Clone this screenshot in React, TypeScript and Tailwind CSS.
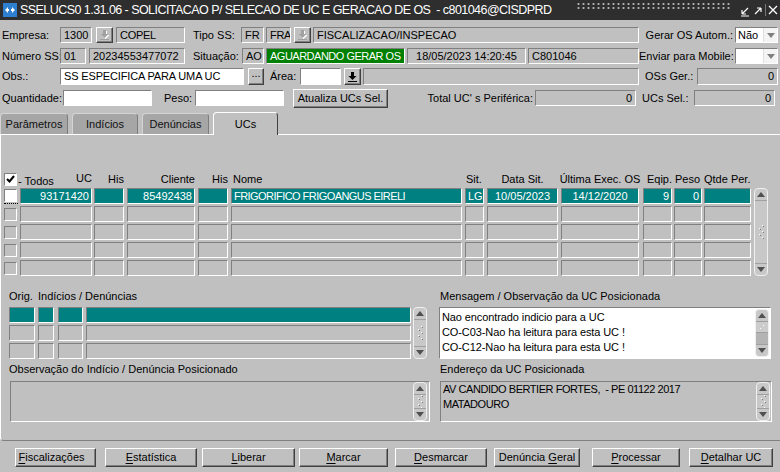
import React from "react";

const inset = "border border-t-[#808080] border-l-[#808080] border-r-white border-b-white";
const raised =
  "border border-t-white border-l-white border-r-[#404040] border-b-[#404040] shadow-[inset_-1px_-1px_0_#808080]";

type P = { className?: string; children?: React.ReactNode };

function Box({ className = "", children }: P) {
  return (
    <div className={`h-full shrink-0 flex items-center px-[3px] whitespace-nowrap overflow-hidden ${inset} ${className}`}>
      {children}
    </div>
  );
}

function Lbl({ className = "", children }: P) {
  return <span className={`shrink-0 whitespace-nowrap leading-[16px] ${className}`}>{children}</span>;
}

function LovBtn({ className = "", active = false }: { className?: string; active?: boolean }) {
  const c = active ? "#000" : "#a0a0a0";
  return (
    <div className={`h-full w-[17px] shrink-0 flex items-center justify-center ${raised} ${className}`}>
      <svg width="9" height="10" viewBox="0 0 9 10">
        {!active && <path d="M4 1h3v4h2.5L5.5 9 1.5 5H4z" fill="#fff" />}
        <path d="M3 0h3v4h2.5L4.5 8 .5 4H3z" fill={c} />
        <rect y="9" width="9" height="1" fill={c} />
      </svg>
    </div>
  );
}

function Select({ value }: { value?: string }) {
  return (
    <div className={`ml-[1px] h-full w-[43px] shrink-0 flex bg-white ${inset}`}>
      <span className="flex-1 pl-[2px] leading-[15px] overflow-hidden">{value}</span>
      <div className="w-[14px] flex items-center justify-center border-l border-[#e0e0e0] bg-[#f4f4f4]">
        <svg width="8" height="5" viewBox="0 0 8 5">
          <path d="M0 0h8L4 5z" fill="#808080" />
        </svg>
      </div>
    </div>
  );
}

function Grip() {
  return (
    <svg width="6" height="16" viewBox="0 0 6 16">
      {[
        [4, 1],
        [1, 4],
        [4, 7],
        [1, 10],
        [4, 13],
      ].map(([x, y], i) => (
        <g key={i}>
          <rect x={x} y={y} width="1" height="1" fill="#fff" />
          <rect x={x + 1} y={y + 1} width="1" height="1" fill="#808080" />
        </g>
      ))}
    </svg>
  );
}

function VScroll({ className = "", thumb = false }: { className?: string; thumb?: boolean }) {
  return (
    <div className={`w-[14px] shrink-0 flex flex-col rounded-[4px] border border-[#f0f0f0] bg-[#c8c8c8] ${className}`}>
      <div className="h-[12px] flex items-center justify-center rounded-t-[4px] border-b border-[#a0a0a0]">
        <svg width="8" height="5" viewBox="0 0 8 5">
          <path d="M0 5L4 0l4 5z" fill="#505050" />
        </svg>
      </div>
      {thumb ? (
        <div className="flex-1 flex flex-col">
          <div className="h-[11px] flex items-center justify-center border-b border-[#a0a0a0] bg-[#cccccc]">
            <svg width="6" height="6" viewBox="0 0 6 6">
              <rect x="4" y="1" width="1" height="1" fill="#fff" />
              <rect x="1" y="4" width="1" height="1" fill="#fff" />
            </svg>
          </div>
          <div className="flex-1 bg-[#b4b4b4]" />
        </div>
      ) : (
        <div className="flex-1 flex items-center justify-center overflow-hidden">
          <Grip />
        </div>
      )}
      <div className="h-[12px] flex items-center justify-center rounded-b-[4px] border-t border-[#a0a0a0]">
        <svg width="8" height="5" viewBox="0 0 8 5">
          <path d="M0 0h8L4 5z" fill="#505050" />
        </svg>
      </div>
    </div>
  );
}

function Btn({ className = "", children }: P) {
  return (
    <div className={`shrink-0 flex items-center justify-center whitespace-nowrap bg-[#c0c0c0] ${raised} ${className}`}>
      <span className="whitespace-pre">{children}</span>
    </div>
  );
}

function Tab({ className = "", children }: P) {
  return (
    <div
      className={`h-[21px] shrink-0 flex items-center justify-center rounded-t-[4px] border-t border-l border-r border-t-[#d4d4d4] border-l-[#d4d4d4] border-r-[#7c7c7c] bg-[#a6a6a6] text-[#111] ${className}`}
    >
      {children}
    </div>
  );
}

const cols = [
  { c: "ml-[2px] w-[72px] justify-end", v: "93171420" },
  { c: "ml-[2px] w-[30px] justify-end", v: "" },
  { c: "ml-[3px] w-[68px] justify-end", v: "85492438" },
  { c: "ml-[3px] w-[30px] justify-end", v: "" },
  { c: "ml-[3px] w-[231px] justify-start tracking-[-0.55px]", v: "FRIGORIFICO FRIGOANGUS EIRELI" },
  { c: "ml-[3px] w-[19px] justify-start", v: "LG" },
  { c: "ml-[3px] w-[71px] justify-center", v: "10/05/2023" },
  { c: "ml-[3px] w-[78px] justify-center", v: "14/12/2020" },
  { c: "ml-[4px] w-[29px] justify-end", v: "9" },
  { c: "ml-[2px] w-[28px] justify-end", v: "0" },
  { c: "ml-[2px] w-[47px] justify-end", v: "" },
];

const heads = [
  { c: "ml-[3px] w-[72px] justify-between", v: "UC" },
  { c: "ml-[2px] w-[30px] justify-end", v: "His" },
  { c: "ml-[3px] w-[68px] justify-end", v: "Cliente" },
  { c: "ml-[3px] w-[30px] justify-end", v: "His" },
  { c: "ml-[3px] w-[231px] justify-start pl-[2px]", v: "Nome" },
  { c: "ml-[3px] w-[19px] justify-start pl-[1px]", v: "Sit." },
  { c: "ml-[3px] w-[71px] justify-center", v: "Data Sit." },
  { c: "ml-[3px] w-[78px] justify-center", v: "Última Exec. OS" },
  { c: "ml-[4px] w-[29px] justify-end", v: "Eqip." },
  { c: "ml-[2px] w-[28px] justify-start pl-[1px]", v: "Peso" },
  { c: "ml-[2px] w-[47px] justify-start", v: "Qtde Per." },
];

const subCols = ["ml-[8px] w-[26px]", "ml-[3px] w-[16px]", "ml-[4px] w-[25px]", "ml-[3px] w-[325px]"];

function U({ children }: P) {
  return <span className="underline underline-offset-[2px]">{children}</span>;
}

export default function App() {
  return (
    <div className="w-[780px] h-[472px] overflow-hidden bg-[#c0c0c0] text-[11px] text-black font-['Liberation_Sans',Arial,sans-serif]">
      {/* title bar */}
      <div className="h-[20px] flex items-center bg-[#2e2e2e] text-white">
        <div className="ml-[3px] w-[14px] h-[14px] shrink-0 flex items-center justify-center bg-[#2f7fd0]">
          <svg width="10" height="8" viewBox="0 0 10 8">
            <path d="M0 4l3-3v2h1v2H3v2z M10 4L7 1v2H6v2h1v2z" fill="#fff" />
          </svg>
        </div>
        <span className="ml-[3px] shrink-0 whitespace-pre text-[12.5px] leading-[20px] tracking-[-0.55px]">
          SSELUCS0 1.31.06 - SOLICITACAO P/ SELECAO DE UC E GERACAO DE OS  - c801046@CISDPRD
        </span>
        <div className="ml-auto mr-[8px] self-start mt-[2px] h-[8px] w-[156px] shrink-0 bg-[radial-gradient(circle,#b0b0b0_1px,transparent_1.2px)] bg-[length:5px_4px]" />
        <svg width="38" height="14" viewBox="0 0 38 14" className="mr-[2px] shrink-0">
          <path d="M2 11L8 5 M2 11h4 M2 11V7" stroke="#fff" strokeWidth="1.2" fill="none" />
          <path d="M1 13h8" stroke="#fff" strokeWidth="1" />
          <path d="M15 11l6-6 M21 5h-4 M21 5v4" stroke="#fff" strokeWidth="1.2" fill="none" />
          <path d="M25.5 1v12" stroke="#777" strokeWidth="1" />
          <path d="M29 3l8 8 M37 3l-8 8" stroke="#fff" strokeWidth="1.3" />
        </svg>
      </div>

      {/* row 1 */}
      <div className="mt-[7px] flex h-[16px]">
        <Lbl className="w-[60px] pl-[2px]">Empresa:</Lbl>
        <Box className="w-[32px]">1300</Box>
        <LovBtn className="ml-[4px]" />
        <Box className="ml-[3px] w-[69px] tracking-[-0.3px]">COPEL</Box>
        <Lbl className="ml-[8px] w-[48px]">Tipo SS:</Lbl>
        <Box className="w-[23px]">FR</Box>
        <Box className="ml-[2px] w-[25px] px-[2px] tracking-[-0.3px]">FRA</Box>
        <LovBtn className="ml-[3px]" />
        <Box className="ml-[2px] w-[326px]">FISCALIZACAO/INSPECAO</Box>
        <Lbl className="w-[95px] text-right pr-[1px]">Gerar OS Autom.:</Lbl>
        <Select value="Não" />
      </div>

      {/* row 2 */}
      <div className="mt-[5px] flex h-[16px]">
        <Lbl className="w-[60px] pl-[2px]">Número SS:</Lbl>
        <Box className="w-[26px]">01</Box>
        <Box className="ml-[3px] w-[96px]">20234553477072</Box>
        <Lbl className="ml-[8px] w-[49px]">Situação:</Lbl>
        <Box className="w-[22px] px-[2px]">AO</Box>
        <Box className="ml-[2px] w-[139px] bg-[#008000] text-white tracking-[-0.5px]">AGUARDANDO GERAR OS</Box>
        <Box className="ml-[2px] w-[119px] justify-center">18/05/2023 14:20:45</Box>
        <Box className="ml-[2px] w-[111px]">C801046</Box>
        <Lbl className="w-[95px] text-right pr-[1px]">Enviar para Mobile:</Lbl>
        <Select />
      </div>

      {/* row 3 */}
      <div className="mt-[4px] flex h-[17px]">
        <Lbl className="w-[60px] pl-[2px]">Obs.:</Lbl>
        <Box className="w-[184px] bg-white tracking-[-0.15px]">SS ESPECIFICA PARA UMA UC</Box>
        <Btn className="ml-[4px] w-[16px] h-full">
          <span className="relative -top-[3px]">...</span>
        </Btn>
        <Lbl className="ml-[6px] w-[30px]">Área:</Lbl>
        <Box className="w-[41px] bg-white" />
        <LovBtn className="ml-[3px]" active />
        <Box className="ml-[2px] w-[276px]" />
        <Lbl className="ml-[6px] w-[52px]">OSs Ger.:</Lbl>
        <Box className="w-[81px] justify-end">0</Box>
      </div>

      {/* row 4 */}
      <div className="mt-[5px] flex h-[16px] items-center">
        <Lbl className="w-[63px] pl-[2px]">Quantidade:</Lbl>
        <Box className="w-[89px] bg-white" />
        <Lbl className="ml-[12px] w-[31px]">Peso:</Lbl>
        <Box className="w-[89px] bg-white" />
        <Btn className="ml-[9px] w-[95px] h-[19px]">Atualiza UCs Sel.</Btn>
        <Lbl className="w-[147px] text-right pr-[2px]">Total UC' s Periférica:</Lbl>
        <Box className="w-[101px] justify-end">0</Box>
        <Lbl className="ml-[6px] w-[52px]">UCs Sel.:</Lbl>
        <Box className="w-[81px] justify-end">0</Box>
      </div>

      {/* tabs */}
      <div className="mt-[6px] flex h-[22px] items-end">
        <Tab className="w-[68px]">Parâmetros</Tab>
        <Tab className="ml-[4px] w-[66px]">Indícios</Tab>
        <Tab className="ml-[4px] w-[67px]">Denúncias</Tab>
        <div className="relative z-10 -mb-px ml-[4px] flex h-[23px] w-[65px] items-center justify-center rounded-t-[4px] border-t border-l border-r border-t-white border-l-white border-r-[#404040] bg-[#c0c0c0]">
          UCs
        </div>
      </div>

      {/* panel */}
      <div className="h-[307px] flex flex-col rounded-bl-[4px] border-t border-l border-b border-t-white border-l-white border-b-[#808080]">
        {/* header */}
        <div className="mt-[37px] flex h-[14px] items-center leading-[14px]">
          <div className={`ml-[3px] w-[13px] h-[13px] shrink-0 flex items-center justify-center bg-white ${inset}`}>
            <svg width="9" height="9" viewBox="0 0 9 9">
              <path d="M1 4l2.5 2.5L8 1" stroke="#000" strokeWidth="2" fill="none" />
            </svg>
          </div>
          {heads.map((h, i) => (
            <div key={i} className={`shrink-0 flex whitespace-nowrap ${h.c}`}>
              {i === 0 && <span className="-ml-[2px] mt-[3px]">- Todos</span>}
              <span>{h.v}</span>
            </div>
          ))}
        </div>

        {/* grid */}
        <div className="mt-[2px] flex">
          <div className="flex flex-col gap-[2px]">
            {[0, 1, 2, 3, 4].map((r) => (
              <div key={r} className="flex h-[16px] items-center">
                <div
                  className={`ml-[3px] w-[14px] h-[16px] shrink-0 flex items-center ${
                    r === 0 ? "border-b border-dotted border-black" : ""
                  }`}
                >
                  <div className={`w-[13px] h-[13px] ${inset} ${r === 0 ? "bg-white" : "bg-[#c0c0c0]"}`} />
                </div>
                {cols.map((c, i) => (
                  <div
                    key={i}
                    className={`h-[16px] shrink-0 flex items-center px-[2px] whitespace-nowrap overflow-hidden ${inset} ${
                      r === 0 ? "bg-[#008080] text-white" : ""
                    } ${c.c}`}
                  >
                    {r === 0 ? c.v : ""}
                  </div>
                ))}
              </div>
            ))}
          </div>
          <VScroll className="ml-[3px] h-[88px]" />
        </div>

        {/* lower labels */}
        <div className="mt-[13px] flex h-[14px] leading-[14px]">
          <div className="ml-[8px] w-[421px] flex">
            <span className="w-[29px]">Orig.</span>
            <span>Indícios / Denúncias</span>
          </div>
          <span className="ml-[10px]">Mensagem / Observação da UC Posicionada</span>
        </div>

        <div className="mt-[4px] flex h-[52px]">
          <div className="flex flex-col gap-[2px]">
            {[0, 1, 2].map((r) => (
              <div key={r} className="flex h-[16px]">
                {subCols.map((c, i) => (
                  <div key={i} className={`h-full shrink-0 ${inset} ${r === 0 ? "bg-[#008080]" : ""} ${c}`} />
                ))}
              </div>
            ))}
          </div>
          <VScroll className="ml-[2px]" />
          <div className={`ml-[12px] w-[332px] flex bg-white ${inset}`}>
            <div className="flex-1 pl-[2px] pt-[2px] leading-[15px] whitespace-nowrap tracking-[-0.1px]">
              <div>Nao encontrado indicio para a UC</div>
              <div>CO-C03-Nao ha leitura para esta UC !</div>
              <div>CO-C12-Nao ha leitura para esta UC !</div>
            </div>
            <VScroll className="my-[1px] mr-[1px]" thumb />
          </div>
        </div>

        <div className="mt-[3px] flex h-[14px] leading-[14px]">
          <span className="ml-[8px] w-[431px]">Observação do Indício / Denúncia Posicionado</span>
          <span>Endereço da UC Posicionada</span>
        </div>

        <div className="mt-[5px] flex h-[41px]">
          <div className={`ml-[9px] w-[420px] flex justify-end ${inset}`}>
            <VScroll className="mr-[2px]" />
          </div>
          <div className={`ml-[10px] w-[332px] flex ${inset}`}>
            <div className="flex-1 pl-[2px] leading-[15px] whitespace-nowrap tracking-[-0.45px]">
              <div className="whitespace-pre">AV CANDIDO BERTIER FORTES,  - PE 01122 2017</div>
              <div>MATADOURO</div>
            </div>
            <VScroll className="mr-[1px]" />
          </div>
        </div>
      </div>

      {/* buttons */}
      <div className="mt-[7px] flex h-[19px]">
        <Btn className="ml-[15px] w-[81px] h-full pr-[8px]">
          <U>F</U>iscalizações
        </Btn>
        <Btn className="ml-[9px] w-[92px] h-full">
          <U>E</U>statística
        </Btn>
        <Btn className="ml-[5px] w-[93px] h-full">
          <U>L</U>iberar
        </Btn>
        <Btn className="ml-[4px] w-[89px] h-full">
          <U>M</U>arcar
        </Btn>
        <Btn className="ml-[7px] w-[92px] h-full">
          <U>D</U>esmarcar
        </Btn>
        <Btn className="ml-[7px] w-[86px] h-full">
          {"Denúncia "}
          <U>G</U>eral
        </Btn>
        <Btn className="ml-[12px] w-[88px] h-full">
          <U>P</U>rocessar
        </Btn>
        <Btn className="ml-[9px] w-[84px] h-full">
          <U>D</U>etalhar UC
        </Btn>
      </div>
    </div>
  );
}
